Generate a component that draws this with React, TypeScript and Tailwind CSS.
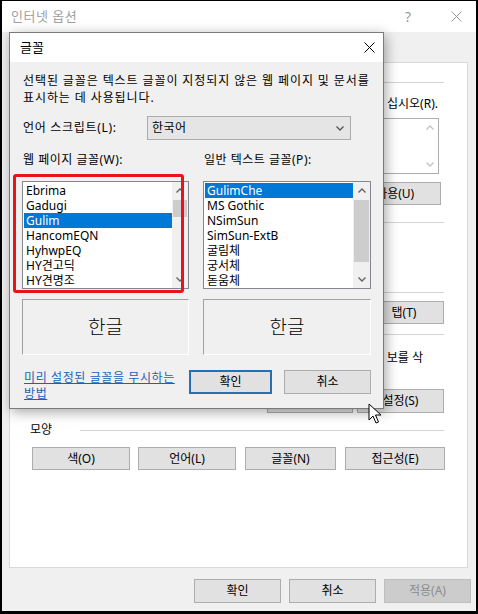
import React from "react";

const F = "font-['Noto_Sans','Noto_Sans_CJK_KR',sans-serif]";

function CloseIcon({ className = "" }: { className?: string }) {
  return (
    <svg width="11" height="11" viewBox="0 0 11 11" className={className}>
      <path d="M0.5 0.5 L10.5 10.5 M10.5 0.5 L0.5 10.5" stroke="currentColor" strokeWidth="1" fill="none" />
    </svg>
  );
}

function Chevron({ up = false, className = "" }: { up?: boolean; className?: string }) {
  return (
    <svg width="8" height="5" viewBox="0 0 8 5" className={className}>
      <polyline
        points={up ? "0.5,4.5 4,1 7.5,4.5" : "0.5,0.5 4,4 7.5,0.5"}
        fill="none"
        stroke="currentColor"
        strokeWidth="1.3"
      />
    </svg>
  );
}

function Btn({
  children,
  className = "",
  primary = false,
  disabled = false,
}: {
  children?: React.ReactNode;
  className?: string;
  primary?: boolean;
  disabled?: boolean;
}) {
  let look = "bg-[#e1e1e1] border border-[#adadad] text-black";
  if (primary) look = "bg-[#e1e1e1] border-2 border-[#2470b3] text-black";
  if (disabled) look = "bg-[#cccccc] border border-[#bfbfbf] text-[#8c8c8c]";
  return (
    <div className={`flex items-center justify-center shrink-0 whitespace-nowrap ${look} ${className}`}>
      {children}
    </div>
  );
}

// group box header: label + rule; labels under the font dialog are left empty
function GroupHeader({ label = "", className = "" }: { label?: string; className?: string }) {
  return (
    <div className={`flex items-center h-[16px] shrink-0 ${className}`}>
      <span className="w-[50px] shrink-0 whitespace-nowrap">{label}</span>
      <div className="flex-1 h-px bg-[#d5d5d5]" />
    </div>
  );
}

function FontList({
  items,
  selected,
  className,
  barClass,
  thumbClass,
}: {
  items: string[];
  selected: number;
  className: string;
  barClass: string;
  thumbClass: string;
}) {
  return (
    <div className={`flex shrink-0 bg-white border border-[#828790] tracking-normal ${className}`}>
      <div className="flex-1 flex flex-col pt-[1px]">
        {items.map((it, i) => (
          <div
            key={it}
            className={`h-[15px] leading-[15px] ml-[1px] pl-[2px] whitespace-nowrap ${
              i === selected ? "bg-[#0078d7] text-white" : "text-black"
            }`}
          >
            {it}
          </div>
        ))}
      </div>
      <div className={`flex flex-col bg-[#f0f0f0] ${barClass}`}>
        <div className="h-[17px] flex items-center justify-center text-[#606060]">
          <Chevron up />
        </div>
        <div className={`mt-[1px] mx-[1px] bg-[#cdcdcd] ${thumbClass}`} />
        <div className="mt-auto h-[17px] flex items-center justify-center text-[#606060]">
          <Chevron />
        </div>
      </div>
    </div>
  );
}

function Preview({ className }: { className: string }) {
  return (
    <div
      className={`h-[56px] shrink-0 flex items-center justify-center text-[19px] font-light tracking-normal border border-[#a0a0a0] border-r-white border-b-white ${className}`}
    >
      한글
    </div>
  );
}

function BackgroundPanel() {
  return (
    <div className="ml-[7px] mt-[30px] w-[459px] h-[506px] shrink-0 bg-white border border-[#d9d9d9] flex flex-col pl-[20px] pr-[23px]">
      <GroupHeader className="mt-[11px]" />
      <div className="mt-[6px] h-[16px] flex items-center justify-end pr-[6px] whitespace-nowrap">
        십시오(R).
      </div>
      <div className="mt-[6px] mr-[5px] h-[56px] shrink-0 flex border border-[#adadad] bg-white">
        <div className="flex-1" />
        <div className="w-[17px] flex flex-col justify-between py-[6px] items-center text-[#c2c2c2]">
          <Chevron up />
          <Chevron />
        </div>
      </div>
      <div className="mt-[8px] h-[23px] flex justify-end gap-[8px] pr-[3px]">
        <Btn className="w-[120px]" />
        <Btn className="w-[100px]" />
        <Btn className="w-[120px]">새 탭 사용(U)</Btn>
      </div>
      <GroupHeader className="mt-[9px]" />
      <div className="h-[54px] shrink-0" />
      <GroupHeader />
      <div className="mt-[1px] h-[23px] flex items-center">
        <Btn className="ml-auto w-[80px] h-[23px]">탭(T)</Btn>
      </div>
      <GroupHeader className="mt-[2px]" />
      <div className="mt-[8px] h-[16px] flex items-center justify-end pr-[21px] whitespace-nowrap">
        보를 삭
      </div>
      <div className="h-[16px]" />
      <div className="mt-[7px] h-[24px] flex items-center">
        <Btn className="ml-auto w-[86px] h-[24px]" />
        <Btn className="ml-[4px] w-[87px] h-[24px]">설정(S)</Btn>
      </div>
      <GroupHeader label="모양" className="mt-[9px]" />
      <div className="mt-[9px] h-[23px] flex">
        <Btn className="ml-[2px] w-[98px]">색(O)</Btn>
        <Btn className="ml-[8px] w-[98px]">언어(L)</Btn>
        <Btn className="ml-[9px] w-[91px]">글꼴(N)</Btn>
        <Btn className="ml-[9px] w-[100px]">접근성(E)</Btn>
      </div>
    </div>
  );
}

function FontDialog() {
  const web = ["Ebrima", "Gadugi", "Gulim", "HancomEQN", "HyhwpEQ", "HY견고딕", "HY견명조"];
  const plain = ["GulimChe", "MS Gothic", "NSimSun", "SimSun-ExtB", "굴림체", "궁서체", "돋움체"];
  return (
    <div className="absolute left-[7px] top-[31px] w-[375px] h-[377px] flex flex-col bg-[#f0f0f0] border border-[#7a7a7a] shadow-[2px_3px_12px_rgba(0,0,0,0.35)]">
      <div className="h-[29px] shrink-0 bg-white flex items-center pl-[10px] pr-[8px]">
        <span className="text-[13px]">글꼴</span>
        <CloseIcon className="ml-auto text-black" />
      </div>
      <div className="flex-1 flex flex-col pl-[12px] pr-[11px] pt-[10px]">
        <div className="ml-[1px] leading-[17px] whitespace-nowrap tracking-[0.9px]">
          선택된 글꼴은 텍스트 글꼴이 지정되지 않은 웹 페이지 및 문서를
          <br />
          표시하는 데 사용됩니다.
        </div>
        <div className="mt-[10px] h-[24px] flex items-center">
          <span className="ml-[1px] w-[124px] shrink-0 whitespace-nowrap tracking-[0.7px]">언어 스크립트(L):</span>
          <div className="w-[204px] h-[24px] flex items-center pl-[4px] pr-[6px] bg-[#e5e5e5] border border-[#acacac]">
            <span className="tracking-[0.5px]">한국어</span>
            <Chevron className="ml-auto text-[#555]" />
          </div>
        </div>
        <div className="mt-[12px] h-[16px] flex items-center tracking-[0.5px]">
          <span className="ml-[1px] w-[181px] shrink-0 whitespace-nowrap">웹 페이지 글꼴(W):</span>
          <span className="whitespace-nowrap">일반 텍스트 글꼴(P):</span>
        </div>
        <div className="mt-[13px] flex gap-[14px]">
          <FontList items={web} selected={2} className="w-[167px] h-[108px]" barClass="w-[16px]" thumbClass="h-[17px]" />
          <FontList items={plain} selected={0} className="w-[168px] h-[108px]" barClass="w-[17px]" thumbClass="h-[62px]" />
        </div>
        <div className="mt-[10px] flex gap-[14px]">
          <Preview className="w-[167px]" />
          <Preview className="w-[168px]" />
        </div>
        <div className="mt-[15px] flex items-start">
          <div className="ml-[2px] w-[165px] shrink-0 leading-[16px] tracking-[0.6px] whitespace-nowrap text-[#1a62b8] underline underline-offset-[1px]">
            미리 설정된 글꼴을 무시하는
            <br />
            방법
          </div>
          <Btn primary className="w-[83px] h-[24px]">확인</Btn>
          <Btn className="ml-[12px] w-[87px] h-[24px]">취소</Btn>
        </div>
      </div>
      <div className="absolute left-[3px] top-[141px] w-[171px] h-[119px] border-[3px] border-[#e8141c] rounded-[3px]" />
    </div>
  );
}

function Cursor() {
  return (
    <svg width="14" height="22" viewBox="0 0 14 22" className="absolute left-[366px] top-[402px]">
      <path
        d="M1 1 L1 17 L5 13 L8 20 L10.5 19 L7.5 12 L13 12 Z"
        fill="white"
        stroke="black"
        strokeWidth="1"
        strokeLinejoin="miter"
      />
    </svg>
  );
}

export default function App() {
  return (
    <div
      className={`relative w-[478px] h-[614px] overflow-hidden border-t border-x-2 border-b-[3px] border-black bg-[#f0f0f0] flex flex-col text-[12px] text-black ${F}`}
    >
      <div className="h-[31px] shrink-0 bg-white flex items-center pl-[9px] pr-[14px]">
        <span className="text-[13px] text-[#a0a0a0] tracking-[0.5px]">인터넷 옵션</span>
        <span className="ml-auto text-[14px] text-[#9a9a9a]">?</span>
        <CloseIcon className="ml-[40px] text-[#9a9a9a]" />
      </div>
      <BackgroundPanel />
      <div className="mt-[11px] flex justify-end gap-[8px] pr-[5px]">
        <Btn className="w-[87px] h-[24px]">확인</Btn>
        <Btn className="w-[87px] h-[24px]">취소</Btn>
        <Btn disabled className="w-[87px] h-[24px]">
          적용(A)
        </Btn>
      </div>
      <FontDialog />
      <Cursor />
    </div>
  );
}
